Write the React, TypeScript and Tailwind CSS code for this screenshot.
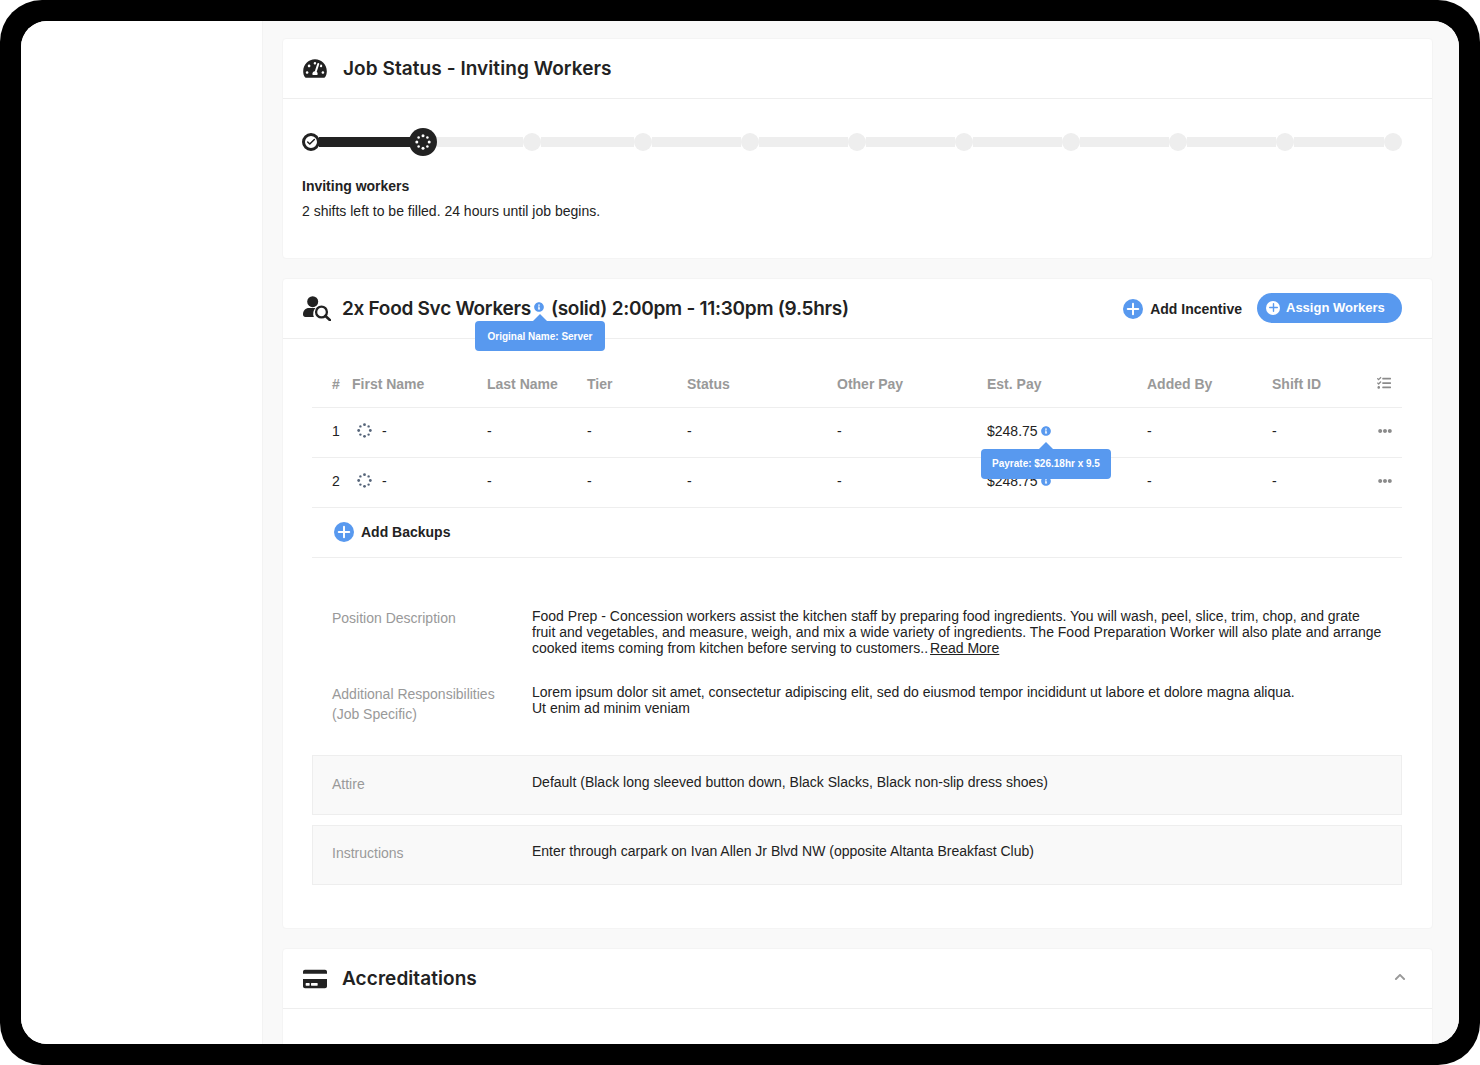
import { Fragment } from 'react';
import { FaChevronUp, FaCreditCard, FaEllipsisH, FaInfoCircle, FaTachometerAlt, FaTasks } from 'react-icons/fa';
import { Check, Plus } from 'lucide-react';

const headers = ['#', 'First Name', 'Last Name', 'Tier', 'Status', 'Other Pay', 'Est. Pay', 'Added By', 'Shift ID'];
const stepGaps = ['w-[86px]', 'w-[93px]', 'w-[89px]', 'w-[89px]', 'w-[89px]', 'w-[89px]', 'w-[89px]', 'w-[89px]', 'w-[90px]'];
const tableCols = 'grid grid-cols-[20px_135px_100px_100px_150px_150px_160px_125px_1fr] items-center pl-5 pr-[10px]';

// dotted loading ring
function Spinner({ className }: { className: string }) {
  const dots = [0, 45, 90, 135, 180, 225, 270, 315];
  return (
    <svg viewBox="0 0 16 16" className={className}>
      {dots.map((d) => (
        <circle
          key={d}
          cx={8 + 6.2 * Math.cos((d * Math.PI) / 180)}
          cy={8 + 6.2 * Math.sin((d * Math.PI) / 180)}
          r={d % 90 === 0 ? 1.5 : 1.25}
          fill="currentColor"
        />
      ))}
    </svg>
  );
}

function UserSearch() {
  return (
    <svg viewBox="0 0 28 25" className="h-[25px] w-[28px] text-[#222]">
      <circle cx="9.7" cy="5.7" r="5.5" fill="currentColor" />
      <path d="M0 18.5C0 14.5 2.6 12 6 12h6.5a8.6 8.6 0 0 0-1.6 9H2.4C1 21 0 20 0 18.5z" fill="currentColor" />
      <circle cx="18.5" cy="16" r="5.4" fill="none" stroke="currentColor" strokeWidth="2.3" />
      <path d="M22.5 20l4.5 4.2" stroke="currentColor" strokeWidth="2.6" strokeLinecap="round" />
    </svg>
  );
}

function PlusCircle({ className, iconClass }: { className: string; iconClass: string }) {
  return (
    <span className={`flex items-center justify-center rounded-full ${className}`}>
      <Plus className={iconClass} strokeWidth={2.6} />
    </span>
  );
}

function Tooltip({ text, className }: { text: string; className: string }) {
  return (
    <div className={`absolute z-10 flex h-[30px] w-[130px] items-center justify-center rounded bg-[#5899ef] font-['Liberation_Sans',sans-serif] text-[10px] font-bold tracking-normal text-white ${className}`}>
      <span className="absolute -top-[7px] left-1/2 h-0 w-0 -translate-x-1/2 border-x-[7px] border-b-[7px] border-x-transparent border-b-[#5899ef]" />
      {text}
    </div>
  );
}

function CardHeader({ icon, iconCol, title, children }: { icon: React.ReactNode; iconCol: string; title: React.ReactNode; children?: React.ReactNode }) {
  return (
    <div className="flex h-[60px] items-center border-b border-[#eee] pl-5 pr-[30px]">
      <div className={`flex shrink-0 items-center ${iconCol}`}>{icon}</div>
      <h2 className="mt-[2px] font-['Inter',sans-serif] text-[19px] font-semibold tracking-[0.07px] text-[#222]">{title}</h2>
      {children}
    </div>
  );
}

function WorkerRow({ n, tip }: { n: number; tip?: boolean }) {
  return (
    <div className={`${tableCols} h-[50px] border-b border-[#eee] pb-1 text-sm text-[#222]`}>
      <span>{n}</span>
      <span className="flex items-center gap-[10px] pl-[5px]">
        <Spinner className="h-[15px] w-[15px] text-[#56657a]" />-
      </span>
      <span>-</span>
      <span>-</span>
      <span>-</span>
      <span>-</span>
      <span className="relative flex items-center gap-[3px]">
        $248.75
        <FaInfoCircle className="h-[10px] w-[10px] text-[#5899ef]" />
        {tip && <Tooltip text="Payrate: $26.18hr x 9.5" className="left-[-6px] top-[28px] pt-[2px]" />}
      </span>
      <span>-</span>
      <span className="flex items-center justify-between">
        -
        <FaEllipsisH className="h-[14px] w-[14px] text-[#8b8b8b]" />
      </span>
    </div>
  );
}

export default function App() {
  return (
    <div className="h-[1065px] w-[1480px] bg-white font-['Liberation_Sans',sans-serif]">
      <div className="h-full rounded-[42px] bg-black p-[21px]">
        <div className="flex h-full overflow-hidden rounded-[26px] bg-white">
          <aside className="w-[242px] shrink-0 border-r border-[#f3f3f3] bg-white" />
          <main className="flex min-w-0 flex-1 flex-col gap-[19px] overflow-hidden bg-[#f9f9f9] pl-[19px] pr-[26px] pt-[17px]">
            {/* job status */}
            <section className="h-[221px] shrink-0 rounded border border-[#f4f4f4] bg-white">
              <CardHeader iconCol="w-[40px]" icon={<FaTachometerAlt className="h-[21px] w-[24px] text-[#222]" />} title="Job Status - Inviting Workers" />
              <div className="pl-[19px] pt-[29px]">
                <div className="flex h-[28px] items-center">
                  <span className="z-10 flex h-[18px] w-[18px] items-center justify-center rounded-full border-[3px] border-[#222] bg-white">
                    <Check className="h-[10px] w-[10px] text-[#222]" strokeWidth={3.5} />
                  </span>
                  <span className="-mx-px h-[10px] w-[91px] bg-[#222]" />
                  <span className="z-10 flex h-[28px] w-[28px] items-center justify-center rounded-full bg-[#222]">
                    <Spinner className="h-[16px] w-[16px] text-white" />
                  </span>
                  {stepGaps.map((w, i) => (
                    <Fragment key={i}>
                      <span className={`h-[10px] bg-[#eee] ${w}`} />
                      <span className="h-[18px] w-[18px] rounded-full bg-[#eee]" />
                    </Fragment>
                  ))}
                </div>
                <p className="mt-[22px] text-sm font-bold leading-4 text-[#222]">Inviting workers</p>
                <p className="mt-[9px] text-sm leading-4 text-[#222]">2 shifts left to be filled. 24 hours until job begins.</p>
              </div>
            </section>

            {/* shift details */}
            <section className="h-[651px] shrink-0 rounded border border-[#f4f4f4] bg-white">
              <CardHeader
                iconCol="w-[39px]"
                icon={<UserSearch />}
                title={
                  <span className="relative flex items-center tracking-[-0.28px]">
                    2x Food Svc Workers
                    <FaInfoCircle className="relative -top-[3px] ml-[3px] mr-[7px] h-[10px] w-[10px] text-[#5899ef]" />
                    <span>(solid) 2:00pm - 11:30pm (9.5hrs)</span>
                    <Tooltip text="Original Name: Server" className="left-[133px] top-[26px]" />
                  </span>
                }
              >
                <div className="ml-auto flex items-center">
                  <PlusCircle className="h-5 w-5 bg-[#5899ef]" iconClass="h-[18px] w-[18px] text-white" />
                  <span className="ml-[7px] text-sm font-bold text-[#222]">Add Incentive</span>
                  <button className="mb-[2px] ml-[15px] flex h-[30px] w-[145px] items-center gap-[6px] rounded-full bg-[#5899ef] pl-[9px] text-[13px] font-bold text-white">
                    <PlusCircle className="h-[14px] w-[14px] bg-white" iconClass="h-[13px] w-[13px] text-[#5899ef]" />
                    Assign Workers
                  </button>
                </div>
              </CardHeader>

              <div className="pl-[29px] pr-[30px]">
                <div className={`${tableCols} mt-[19px] h-[50px] border-b border-[#eee] pt-[2px] text-sm font-bold text-[#999]`}>
                  {headers.slice(0, 8).map((h) => (
                    <span key={h}>{h}</span>
                  ))}
                  <span className="flex items-center justify-between">
                    {headers[8]}
                    <FaTasks className="mb-[2px] h-[14px] w-[16px] text-[#8b8b8b]" />
                  </span>
                </div>
                <WorkerRow n={1} tip />
                <WorkerRow n={2} />
                <div className="flex h-[50px] items-center border-b border-[#eee] pb-[2px] pl-[22px]">
                  <PlusCircle className="h-5 w-5 bg-[#5899ef]" iconClass="h-[18px] w-[18px] text-white" />
                  <span className="ml-[7px] text-sm font-bold text-[#222]">Add Backups</span>
                </div>

                <div className="mt-[50px] flex pl-5 pr-[18px] text-sm leading-4 text-[#222]">
                  <div className="w-[200px] shrink-0 pt-[2px] text-[#999]">Position Description</div>
                  <p>
                    Food Prep - Concession workers assist the kitchen staff by preparing food ingredients. You will wash, peel, slice, trim, chop, and grate fruit and vegetables, and measure, weigh, and mix a wide variety of ingredients. The Food Preparation Worker will also plate and arrange cooked items coming from kitchen before serving to customers..<span className="ml-[2px] underline">Read More</span>
                  </p>
                </div>
                <div className="mt-[28px] flex pl-5 pr-[10px] text-sm leading-4 text-[#222]">
                  <div className="w-[200px] shrink-0 leading-5 text-[#999]">
                    Additional Responsibilities
                    <br />
                    (Job Specific)
                  </div>
                  <p>
                    Lorem ipsum dolor sit amet, consectetur adipiscing elit, sed do eiusmod tempor incididunt ut labore et dolore magna aliqua.
                    <br />
                    Ut enim ad minim veniam
                  </p>
                </div>

                <div className="mt-[31px] flex h-[60px] border border-[#eee] bg-[#f9f9f9] pl-[19px] pt-[18px] text-sm leading-4 text-[#222]">
                  <div className="w-[200px] shrink-0 pt-[2px] text-[#999]">Attire</div>
                  <p>Default (Black long sleeved button down, Black Slacks, Black non-slip dress shoes)</p>
                </div>
                <div className="mt-[10px] flex h-[60px] border border-[#eee] bg-[#f9f9f9] pl-[19px] pt-[17px] text-sm leading-4 text-[#222]">
                  <div className="w-[200px] shrink-0 pt-[2px] text-[#999]">Instructions</div>
                  <p>Enter through carpark on Ivan Allen Jr Blvd NW (opposite Altanta Breakfast Club)</p>
                </div>
              </div>
            </section>

            {/* accreditations */}
            <section className="h-[200px] shrink-0 rounded border border-[#f4f4f4] bg-white">
              <CardHeader iconCol="w-[39px]" icon={<FaCreditCard className="h-[24px] w-[24px] text-[#222]" />} title="Accreditations">
                <FaChevronUp className="mb-[3px] ml-auto mr-[-4px] h-3 w-3 text-[#999]" />
              </CardHeader>
            </section>
          </main>
        </div>
      </div>
    </div>
  );
}
